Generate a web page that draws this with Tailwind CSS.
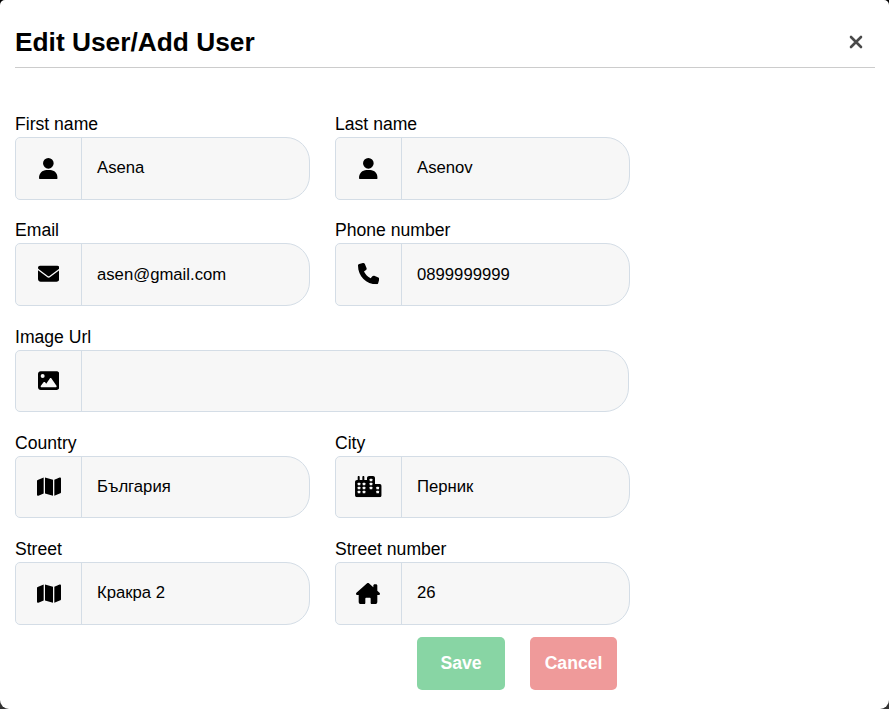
<!DOCTYPE html>
<html lang="en">
<head>
<meta charset="utf-8">
<title>Edit User</title>
<script src="https://cdn.jsdelivr.net/npm/@tailwindcss/browser@4"></script>
</head>
<body class="bg-linear-to-b from-black to-[#333333] font-['Liberation_Sans',Arial,sans-serif] text-black">
<svg class="hidden">
  <symbol id="user" viewBox="0 0 448 512"><path d="M224 256A128 128 0 1 0 224 0a128 128 0 1 0 0 256zm-45.700 34C79.800 290 0 376 0 480C0 498.700 13.300 512 29.700 512H418.300c16.400 0 29.700-13.300 29.700-32C448 376 368.200 290 269.700 290H178.300z"/></symbol>
  <symbol id="mail" viewBox="0 0 512 512"><path d="M48 64C21.500 64 0 85.500 0 112c0 15.100 7.100 29.300 19.200 38.400L236.800 313.600c11.400 8.500 27 8.500 38.400 0L492.800 150.400c12.100-9.100 19.200-23.300 19.200-38.400c0-26.500-21.500-48-48-48H48zM0 176V384c0 35.300 28.700 64 64 64H448c35.300 0 64-28.700 64-64V176L294.400 339.200c-22.800 17.100-54 17.100-76.800 0L0 176z"/></symbol>
  <symbol id="phone" viewBox="0 0 512 512"><path d="M164.900 24.600c-7.700-18.600-28-28.500-47.400-23.200l-88 24C12.100 30.200 0 46 0 64C0 311.400 200.600 512 448 512c18 0 33.800-12.100 38.600-29.500l24-88c5.300-19.400-4.600-39.700-23.200-47.400l-96-40c-16.300-6.800-35.200-2.100-46.300 11.600L304.700 368C234.300 334.700 177.300 277.700 144 207.300L193.300 167c13.700-11.200 18.400-30 11.600-46.300l-40-96z"/></symbol>
  <symbol id="image" viewBox="0 0 512 512"><path d="M0 96C0 60.700 28.700 32 64 32H448c35.300 0 64 28.700 64 64V416c0 35.300-28.700 64-64 64H64c-35.300 0-64-28.700-64-64V96zM323.800 202.500c-4.500-6.600-11.900-10.500-19.800-10.500s-15.400 3.900-19.800 10.500l-87 127.600L170.700 297c-4.600-5.700-11.500-9-18.700-9s-14.200 3.300-18.700 9l-64 80c-5.800 7.200-6.900 17.100-2.900 25.400s12.400 13.600 21.600 13.600h96 32H424c8.900 0 17.100-4.900 21.200-12.800s3.600-17.400-1.400-24.700l-120-176zM112 192a48 48 0 1 0 0-96 48 48 0 1 0 0 96z"/></symbol>
  <symbol id="map" viewBox="0 0 576 512"><path d="M384 476.100L192 421.200V35.900L384 90.800V476.100zm32-1.200V88.400L543.100 37.500c15.800-6.300 32.900 5.300 32.900 22.300V394.600c0 9.800-6 18.600-15.100 22.300L416 474.800zM15.100 95.100L160 37.200V423.600L32.900 474.500C17.100 480.800 0 469.200 0 452.200V117.400c0-9.800 6-18.600 15.100-22.300z"/></symbol>
  <symbol id="city" viewBox="0 0 640 512">
    <path d="M480 48c0-26.500-21.500-48-48-48H336c-26.500 0-48 21.500-48 48V96H224V24c0-13.300-10.700-24-24-24s-24 10.700-24 24V96H112V24c0-13.300-10.700-24-24-24S64 10.700 64 24V96H48C21.500 96 0 117.500 0 144V464c0 26.500 21.500 48 48 48H592c26.500 0 48-21.500 48-48V240c0-26.500-21.500-48-48-48H480V48z"/>
    <g fill="#f7f7f7"><rect x="64" y="160" width="64" height="64" rx="16"/><rect x="184" y="160" width="64" height="64" rx="16"/><rect x="64" y="256" width="64" height="64" rx="16"/><rect x="184" y="256" width="64" height="64" rx="16"/><rect x="64" y="352" width="64" height="64" rx="16"/><rect x="184" y="352" width="64" height="64" rx="16"/><rect x="352" y="64" width="64" height="64" rx="16"/><rect x="352" y="160" width="64" height="64" rx="16"/><rect x="352" y="256" width="64" height="64" rx="16"/><rect x="512" y="256" width="64" height="64" rx="16"/><rect x="512" y="352" width="64" height="64" rx="16"/></g>
  </symbol>
  <symbol id="house" viewBox="0 0 576 512"><path d="M543.800 287.600c17 0 32-14 32-32.100c1-9-3-17-11-24L512 185V64c0-17.700-14.300-32-32-32H448c-17.700 0-32 14.300-32 32v36.700L309.500 7c-6-5-14-7-21-7s-15 1-22 8L10 231.500c-7 7-10 15-10 24c0 18 14 32.100 32 32.100h32V448c0 35.300 28.700 64 64 64h64c17.700 0 32-14.300 32-32V376c0-13.300 10.700-24 24-24h80c13.300 0 24 10.700 24 24V480c0 17.700 14.300 32 32 32h64c35.300 0 64-28.700 64-64V287.600h31.800z"/></symbol>
</svg>
<main class="h-[709px] w-[889px] overflow-hidden rounded-t-[5px] rounded-b-[9px] bg-white px-[15px] pt-[15px]">
  <header class="flex h-[53px] w-[860px] items-center justify-between border-b border-[#cccccc]">
    <h1 class="pt-[2px] text-[26.300px] leading-[52px] font-bold">Edit User/Add User</h1>
    <button class="mr-[12px] flex" aria-label="Close"><svg class="mt-[2px] h-[14px] w-[14px]" viewBox="0 0 14 14" fill="none" stroke="#4a4a4a" stroke-width="2.600" stroke-linecap="round"><path d="M2 2L12 12M12 2L2 12"/></svg></button>
  </header>
  <form class="mt-[43px] grid w-[615px] grid-cols-[295px_295px] gap-x-[25px]">
    <div class="h-[106.250px]"><label class="block h-[26px] text-[17.600px] leading-[26px]">First name</label><div class="flex h-[62.600px] rounded-l-[5px] rounded-r-[24px] border border-[#d4dde6] bg-[#f7f7f7]"><span class="flex w-[66px] items-center justify-center border-r border-[#d4dde6]"><svg class="h-[21.300px] w-[18.700px]"><use href="#user"/></svg></span><span class="pl-[15px] text-[16.700px] leading-[60px]">Asena</span></div></div>
    <div class="h-[106.250px]"><label class="block h-[26px] text-[17.600px] leading-[26px]">Last name</label><div class="flex h-[62.600px] rounded-l-[5px] rounded-r-[24px] border border-[#d4dde6] bg-[#f7f7f7]"><span class="flex w-[66px] items-center justify-center border-r border-[#d4dde6]"><svg class="h-[21.300px] w-[18.700px]"><use href="#user"/></svg></span><span class="pl-[15px] text-[16.700px] leading-[60px]">Asenov</span></div></div>
    <div class="h-[106.250px]"><label class="block h-[26px] text-[17.600px] leading-[26px]">Email</label><div class="flex h-[62.600px] rounded-l-[5px] rounded-r-[24px] border border-[#d4dde6] bg-[#f7f7f7]"><span class="flex w-[66px] items-center justify-center border-r border-[#d4dde6] pb-px"><svg class="h-[21.300px] w-[21.300px]"><use href="#mail"/></svg></span><span class="pl-[15px] text-[16.700px] leading-[62px]">asen@gmail.com</span></div></div>
    <div class="h-[106.250px]"><label class="block h-[26px] text-[17.600px] leading-[26px]">Phone number</label><div class="flex h-[62.600px] rounded-l-[5px] rounded-r-[24px] border border-[#d4dde6] bg-[#f7f7f7]"><span class="flex w-[66px] items-center justify-center border-r border-[#d4dde6] pb-px"><svg class="h-[21.300px] w-[21.300px]"><use href="#phone"/></svg></span><span class="pl-[15px] text-[16.700px] leading-[62px]">0899999999</span></div></div>
    <div class="col-span-2 h-[106.250px]"><label class="block h-[26px] text-[17.600px] leading-[26px]">Image Url</label><div class="mr-px flex h-[62.600px] rounded-l-[5px] rounded-r-[24px] border border-[#d4dde6] bg-[#f7f7f7]"><span class="flex w-[66px] items-center justify-center border-r border-[#d4dde6]"><svg class="h-[21.300px] w-[21.300px]"><use href="#image"/></svg></span></div></div>
    <div class="h-[106.250px]"><label class="block h-[26px] text-[17.600px] leading-[26px]">Country</label><div class="flex h-[62.600px] rounded-l-[5px] rounded-r-[24px] border border-[#d4dde6] bg-[#f7f7f7]"><span class="flex w-[66px] items-center justify-center border-r border-[#d4dde6]"><svg class="h-[21.300px] w-[24px]"><use href="#map"/></svg></span><span class="pl-[15px] text-[16.700px] leading-[60px]">България</span></div></div>
    <div class="h-[106.250px]"><label class="block h-[26px] text-[17.600px] leading-[26px]">City</label><div class="flex h-[62.600px] rounded-l-[5px] rounded-r-[24px] border border-[#d4dde6] bg-[#f7f7f7]"><span class="flex w-[66px] items-center justify-center border-r border-[#d4dde6]"><svg class="h-[21.300px] w-[26.700px]"><use href="#city"/></svg></span><span class="pl-[15px] text-[16.700px] leading-[60px]">Перник</span></div></div>
    <div class="h-[88.600px]"><label class="block h-[26px] text-[17.600px] leading-[26px]">Street</label><div class="flex h-[62.600px] rounded-l-[5px] rounded-r-[24px] border border-[#d4dde6] bg-[#f7f7f7]"><span class="flex w-[66px] items-center justify-center border-r border-[#d4dde6]"><svg class="h-[21.300px] w-[24px]"><use href="#map"/></svg></span><span class="pl-[15px] text-[16.700px] leading-[60px]">Кракра 2</span></div></div>
    <div class="h-[88.600px]"><label class="block h-[26px] text-[17.600px] leading-[26px]">Street number</label><div class="flex h-[62.600px] rounded-l-[5px] rounded-r-[24px] border border-[#d4dde6] bg-[#f7f7f7]"><span class="flex w-[66px] items-center justify-center border-r border-[#d4dde6] pr-px"><svg class="h-[21.300px] w-[24px]"><use href="#house"/></svg></span><span class="pl-[15px] text-[16.700px] leading-[60px]">26</span></div></div>
  </form>
  <div class="mt-[12.400px] flex gap-[25px] pl-[402px] text-[17.600px] font-bold text-white">
    <button class="h-[53px] w-[88px] rounded-[5px] bg-[#88d5a4]">Save</button>
    <button class="h-[53px] w-[87px] rounded-[5px] bg-[#ef9a9a]">Cancel</button>
  </div>
</main>
</body>
</html>
